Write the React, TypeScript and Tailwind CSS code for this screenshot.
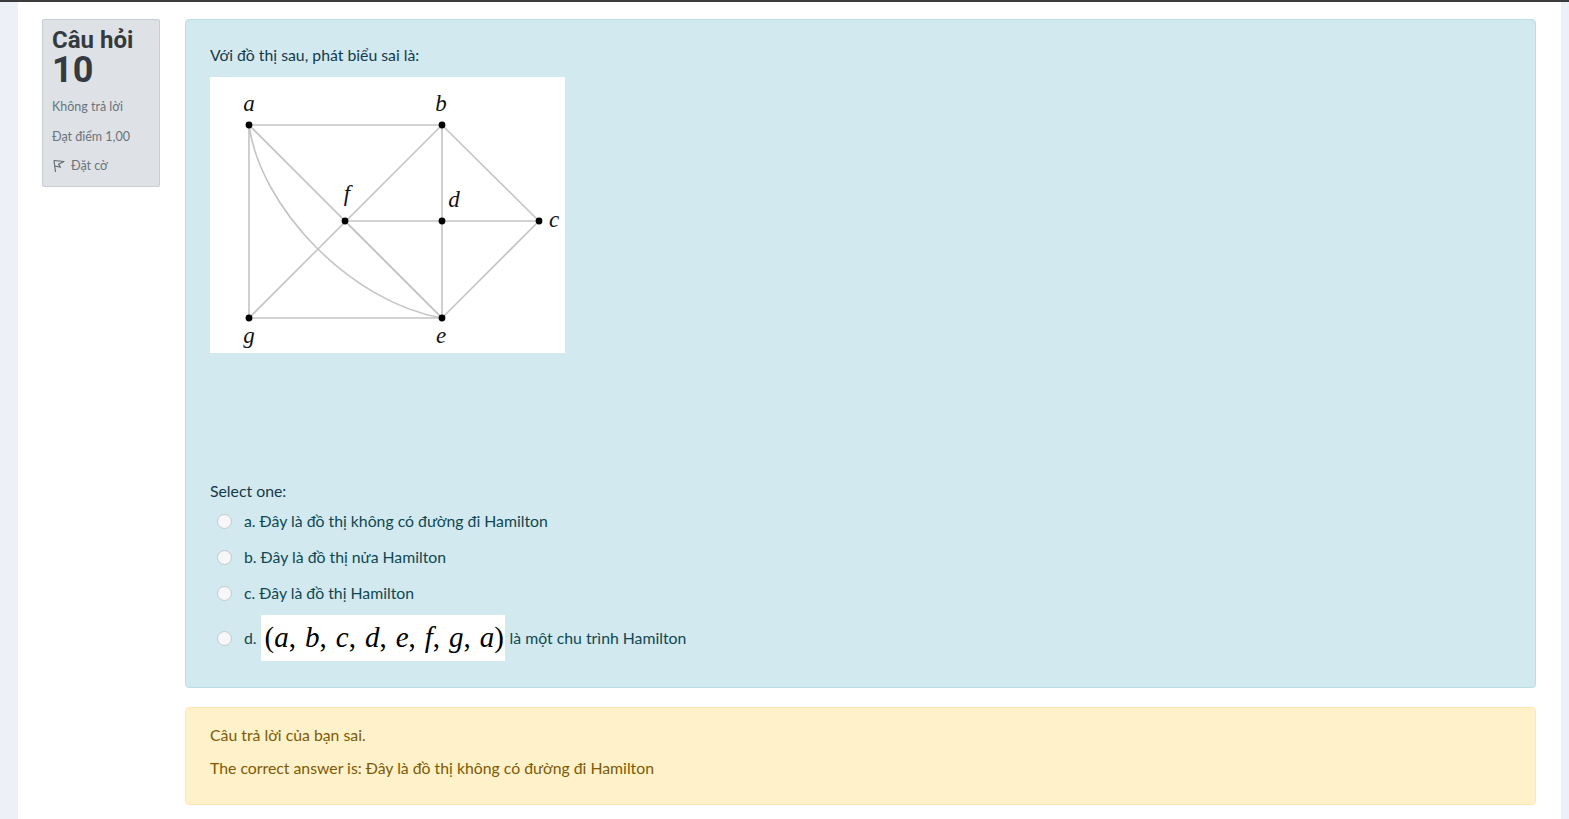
import React from 'react';

const nodes: { id: string; x: number; y: number; lx: number; ly: number }[] = [
  { id: 'a', x: 39, y: 48, lx: 39, ly: 34 },
  { id: 'b', x: 232, y: 48, lx: 231, ly: 34 },
  { id: 'f', x: 135, y: 144, lx: 137, ly: 124 },
  { id: 'd', x: 232, y: 144, lx: 244, ly: 130 },
  { id: 'c', x: 329, y: 144, lx: 344, ly: 150 },
  { id: 'g', x: 39, y: 241, lx: 39, ly: 266 },
  { id: 'e', x: 232, y: 241, lx: 231, ly: 266 },
];

const edges: [number, number, number, number][] = [
  [39, 48, 232, 48],
  [39, 48, 39, 241],
  [39, 48, 232, 241],
  [135, 144, 232, 241],
  [39, 241, 232, 241],
  [39, 241, 232, 48],
  [232, 48, 232, 241],
  [232, 48, 329, 144],
  [329, 144, 232, 241],
  [135, 144, 329, 144],
];

const GraphPicture = () => (
  <svg width="355" height="276" viewBox="0 0 355 276" className="block bg-white">
    {edges.map(([x1, y1, x2, y2], i) => (
      <line key={i} x1={x1} y1={y1} x2={x2} y2={y2} stroke="#c4c4c4" strokeWidth="1.6" />
    ))}
    <path d="M39 48 C 50 130, 140 225, 232 241" fill="none" stroke="#c4c4c4" strokeWidth="1.6" />
    {nodes.map(n => (
      <g key={n.id}>
        <circle cx={n.x} cy={n.y} r="3.4" fill="#000" />
        <text
          x={n.lx}
          y={n.ly}
          textAnchor="middle"
          fontSize="23"
          fontStyle="italic"
          fontFamily="'Liberation Serif', serif"
          fill="#111"
        >
          {n.id}
        </text>
      </g>
    ))}
  </svg>
);

const Radio = () => (
  <span className="inline-block w-[15px] h-[15px] rounded-full border border-[#c3c8cc] bg-[#f7f7f7] shrink-0" />
);

const FlagIcon = () => (
  <svg width="13" height="14" viewBox="0 0 13 14" fill="none" stroke="#5f666d" strokeWidth="1.1" strokeLinejoin="round">
    <path d="M2 1.5 L3.5 13" />
    <path d="M2 1.5 L12 2.5 L6.5 5.2 L8.5 8.2 L2.8 7" />
  </svg>
);

const options = [
  'a. Đây là đồ thị không có đường đi Hamilton',
  'b. Đây là đồ thị nửa Hamilton',
  'c. Đây là đồ thị Hamilton',
];

const mathVars = ['a', 'b', 'c', 'd', 'e', 'f', 'g', 'a'];

export default function App() {
  return (
    <div className="min-h-screen flex bg-[#eef0f8] border-t-2 border-[#3b3b3b] font-['Lato',sans-serif]">
      <div className="w-[18px] shrink-0" />
      <div className="flex-1 bg-white flex gap-[25px] pl-[24px] pr-[25px] pt-[17px] pb-[15px]">
        {/* question info */}
        <div className="w-[118px] h-[168px] shrink-0 bg-[#dee2e6] border border-[#c9ced4] rounded-[2px] pl-[9px] pt-[8px]">
          <h3 className="font-['Roboto',sans-serif] font-bold text-[#343a40]">
            <span className="block text-[24px] leading-[24px]">Câu hỏi</span>
            <span className="block text-[36px] leading-[36px]">10</span>
          </h3>
          <div className="mt-[11px] text-[12.5px] text-[#6a737b] leading-[16px]">Không trả lời</div>
          <div className="mt-[14px] text-[12.5px] text-[#6a737b] leading-[16px]">Đạt điểm 1,00</div>
          <div className="mt-[13px] flex items-center gap-[6px] text-[12.5px] text-[#6a737b] leading-[16px]">
            <FlagIcon />
            <span>Đặt cờ</span>
          </div>
        </div>

        {/* question body */}
        <div className="flex-1 flex flex-col gap-[19px]">
          <div className="bg-[#d2eaef] border border-[#b9dfe6] rounded-[4px] px-[24px] pt-[23px] pb-[22px] text-[#0f4753] text-[15.8px]">
            <p className="leading-[24px] text-[#16394a]">Với đồ thị sau, phát biểu sai là:</p>
            <div className="mt-[10px]">
              <GraphPicture />
            </div>
            <p className="mt-[126px] leading-[24px] text-[#16394a]">Select one:</p>
            <div className="flex flex-col">
              {options.map(o => (
                <div key={o} className="h-[36px] flex items-center pl-[7px] gap-[12px]">
                  <Radio />
                  <span className="leading-[24px]">{o}</span>
                </div>
              ))}
              <div className="py-[4px] flex items-center pl-[7px] gap-[12px]">
                <Radio />
                <div className="flex items-center">
                  <span className="leading-[24px] pr-[4px]">d.</span>
                  <span className="h-[46px] w-[244px] bg-white flex items-center pl-[4px] font-['Liberation_Serif',serif] text-[29px] text-black whitespace-nowrap">
                    (
                    {mathVars.map((v, i) => (
                      <React.Fragment key={i}>
                        <i>{v}</i>
                        {i < mathVars.length - 1 ? <span className="mr-[9px]">,</span> : null}
                      </React.Fragment>
                    ))}
                    )
                  </span>
                  <span className="leading-[24px] pl-[5px]">là một chu trình Hamilton</span>
                </div>
              </div>
            </div>
          </div>

          <div className="bg-[#fff1c9] border border-[#fde9b0] rounded-[4px] px-[24px] pt-[15px] pb-[24px] text-[#7c5a05] text-[15.8px]">
            <p className="leading-[24px]">Câu trả lời của bạn sai.</p>
            <p className="mt-[9px] leading-[24px]">The correct answer is: Đây là đồ thị không có đường đi Hamilton</p>
          </div>
        </div>
      </div>
      <div className="w-[8px] shrink-0" />
    </div>
  );
}
